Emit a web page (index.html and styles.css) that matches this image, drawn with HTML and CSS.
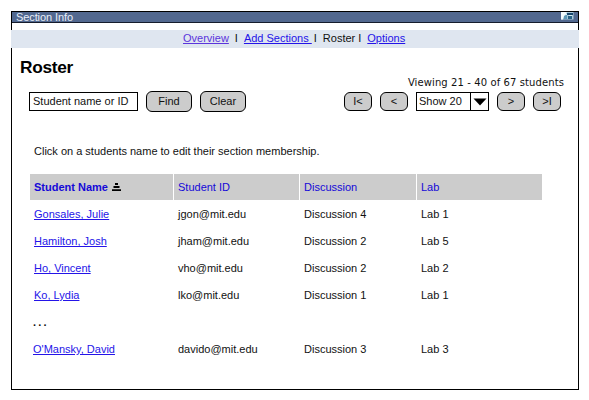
FILE: index.html
```html
<!DOCTYPE html>
<html lang="en">
<head>
<meta charset="utf-8">
<title>Section Info</title>
<link rel="stylesheet" href="styles.css">
</head>
<body>
<div class="window">
  <header class="titlebar">
    <span class="title">Section Info</span>
    <svg class="window-icon" width="13" height="8" viewBox="0 0 13 8">
      <rect width="12.5" height="7.5" fill="#a9c9dc"/>
      <path d="M0 0H6L3.5 4L2 7.5H0Z" fill="#f4fbfd"/>
      <path d="M6 1H12V3H6Z" fill="#17466c"/>
      <path d="M3 4L6 2.5V7H2.5Z" fill="#5e9ab8"/>
      <path d="M7 4H11V7H7Z" fill="#286386"/>
      <path d="M8 3H11V4H8ZM4 2H6V3H4Z" fill="#d9edf3"/>
    </svg>
  </header>
  <nav class="nav">
    <a class="visited" href="#">Overview</a><span class="sep sep-a">I</span><a class="add" href="#">Add Sections&nbsp;</a><span class="sep sep-b">I</span><span class="current">Roster</span><span class="sep sep-c">I</span><a href="#">Options</a>
  </nav>
  <main>
    <h1>Roster</h1>
    <p class="viewing">Viewing 21 - 40 of 67 students</p>
    <div class="tools">
      <div class="field">Student name or ID</div>
      <button class="btn">Find</button>
      <button class="btn">Clear</button>
      <div class="pager">
        <button class="btn small">I&lt;</button>
        <button class="btn small">&lt;</button>
        <div class="select"><span>Show 20</span><i><svg width="14" height="8" viewBox="0 0 14 8"><path d="M0.5 0.5H13.5L7 7.5Z"/></svg></i></div>
        <button class="btn small">&gt;</button>
        <button class="btn small">&gt;I</button>
      </div>
    </div>
    <p class="hint">Click on a students name to edit their section membership.</p>
    <div class="roster">
      <div class="row head">
        <span class="sorted">Student Name<svg width="9" height="8" viewBox="0 0 9 8"><path d="M3 0H6V2H3ZM1.5 3H7.5V5H1.5ZM0 6.2H9V8H0Z"/></svg></span><span>Student ID</span><span>Discussion</span><span>Lab</span>
      </div>
      <div class="row"><span><a href="#">Gonsales, Julie</a></span><span>jgon@mit.edu</span><span>Discussion 4</span><span>Lab 1</span></div>
      <div class="row"><span><a href="#">Hamilton, Josh</a></span><span>jham@mit.edu</span><span>Discussion 2</span><span>Lab 5</span></div>
      <div class="row"><span><a href="#">Ho, Vincent</a></span><span>vho@mit.edu</span><span>Discussion 2</span><span>Lab 2</span></div>
      <div class="row"><span><a href="#">Ko, Lydia</a></span><span>lko@mit.edu</span><span>Discussion 1</span><span>Lab 1</span></div>
      <div class="row"><span class="dots">...</span></div>
      <div class="row"><span class="last"><a href="#">O'Mansky, David</a></span><span>davido@mit.edu</span><span>Discussion 3</span><span>Lab 3</span></div>
    </div>
  </main>
</div>
</body>
</html>
```
FILE: styles.css
```css
* { box-sizing: border-box; }
body {
  margin: 0;
  padding: 11px 10px 10px 11px;
  background: #fff;
  color: #111;
  font: 11px/13px "Liberation Sans", Arial, sans-serif;
}
h1, p { margin: 0; }
a { color: #2414e8; text-decoration: underline; text-underline-offset: 1px; }
.window { width: 568px; height: 379px; border: 1px solid #000; }
.titlebar {
  display: flex;
  justify-content: space-between;
  height: 11px;
  padding: 0 4px;
  background: #52688f;
  border-bottom: 1px solid #151c2c;
  color: #e8eef8;
  line-height: 11px;
}
.title { letter-spacing: -0.1px; }
.window-icon { display: block; }
.nav {
  display: flex;
  height: 18px;
  margin: 7px -1px 0;
  padding-left: 172px;
  background: #dfe6f0;
  line-height: 17px;
}
.nav .visited { color: #5b35dc; }
.sep-a { margin: 0 6px; }
.sep-b { margin: 0 6px 0 2px; }
.sep-c { margin: 0 6px 0 3px; }
main { padding-left: 8px; }
h1 { height: 28px; padding-top: 9px; font-size: 17.3px; line-height: 20px; letter-spacing: -0.3px; color: #000; }
.viewing {
  height: 15px;
  padding-right: 14px;
  font: 10px/13px "DejaVu Sans", Verdana, sans-serif;
  letter-spacing: 0.1px;
  text-align: right;
}
.tools { display: flex; align-items: center; height: 21px; padding-left: 9px; gap: 8px; }
.field, .select { height: 19px; border: 1px solid #000; background: #fff; line-height: 17px; white-space: nowrap; }
.field { width: 109px; padding-left: 3px; }
.btn {
  width: 46px;
  height: 21px;
  padding: 0;
  border: 1px solid #000;
  border-radius: 6px;
  background: #ccc;
  color: #111;
  font: inherit;
}
.btn.small { width: 28px; height: 19px; }
.pager { display: flex; gap: 8px; margin-left: 90px; }
.select { display: flex; width: 73px; padding-left: 2px; }
.select span { flex: 1; }
.select i { display: flex; align-items: center; justify-content: center; width: 18px; border-left: 1px solid #000; }
.hint { margin: 33px 0 0 14px; white-space: nowrap; }
.roster { width: 512px; margin: 16px 0 0 10px; }
.row { display: grid; grid-template-columns: 143px 125px 116px 125px; column-gap: 1px; height: 27px; line-height: 27px; }
.row span { padding-left: 4px; white-space: nowrap; }
.row.head { height: 26px; margin-bottom: 1px; line-height: 26px; color: #1408d8; }
.head span { height: 26px; background: #ccc; }
.head .sorted { font-weight: bold; }
.head svg { margin-left: 4px; fill: #000; }
.row .dots { padding-left: 3px; letter-spacing: 2.2px; font-weight: bold; }
.row .last { padding-left: 3px; }
```
